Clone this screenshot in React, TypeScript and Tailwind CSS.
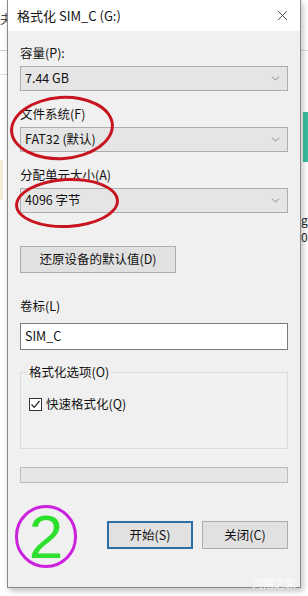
import { ChevronDown, X } from 'lucide-react';

// 格式化对话框（Windows 10 风格）
const font = { fontFamily: '"Noto Sans CJK SC", "Noto Sans", sans-serif' };

function Combo({ value }: { value: string }) {
  return (
    <div className="mt-[5px] flex h-[25px] w-[268px] items-center justify-between border border-[#adadad] bg-[#e5e5e5] pl-[4px] pr-[5px] text-[12.5px] text-[#111]">
      <span>{value}</span>
      <ChevronDown size={13} strokeWidth={1.2} className="text-[#555]" />
    </div>
  );
}

export default function App() {
  return (
    <div className="relative h-[596px] w-[308px] overflow-hidden bg-white" style={font}>
      {/* 背景里露出的其它窗口 */}
      <div className="absolute left-0 top-[10px] text-[12px] text-[#444]">夫</div>
      <div className="absolute left-0 top-[50px] h-px w-[7px] bg-[#ccc]" />
      <div className="absolute left-0 top-[74px] h-px w-[7px] bg-[#ddd]" />
      <div className="absolute left-0 top-[160px] h-[40px] w-[3px] bg-[#f4eed8]" />
      <div className="absolute right-0 top-[50px] h-px w-[7px] bg-[#ddd]" />
      <div className="absolute right-0 top-[112px] h-[50px] w-[5px] bg-[#3cbfa0]" />
      <div className="absolute left-[301px] top-[214px] text-[12px] leading-[12px] text-[#222]">g</div>
      <div className="absolute left-[301px] top-[231px] text-[12px] leading-[12px] text-[#222]">0</div>

      <div className="relative ml-[7px] flex h-[588px] w-[294px] flex-col border border-t-0 border-[#8a8a8a] bg-[#f0f0f0] shadow-[2px_3px_6px_rgba(0,0,0,0.25)]">
        {/* 标题栏 */}
        <div className="flex h-[31px] items-center justify-between bg-white pl-[9px] pr-[9px]">
          <span className="text-[13px] text-[#111]">格式化 SIM_C (G:)</span>
          <X size={17} strokeWidth={1.1} className="text-[#222]" />
        </div>

        <div className="flex flex-col pl-[12px] text-[12.5px] text-[#111]">
          <div className="mt-[14px] h-[16px] leading-[16px]">容量(P):</div>
          <Combo value="7.44 GB" />

          <div className="mt-[15px] h-[16px] leading-[16px]">文件系统(F)</div>
          <Combo value="FAT32 (默认)" />

          <div className="mt-[15px] h-[16px] leading-[16px]">分配单元大小(A)</div>
          <Combo value="4096 字节" />

          <button className="mt-[33px] h-[27px] w-[156px] border border-[#adadad] bg-[#e1e1e1] text-[12.5px] text-[#111]">
            还原设备的默认值(D)
          </button>

          <div className="mt-[25px] h-[16px] leading-[16px]">卷标(L)</div>
          <div className="mt-[9px] flex h-[27px] w-[268px] items-center border border-[#7a7a7a] bg-white pl-[4px]">
            SIM_C
          </div>

          {/* 格式化选项 */}
          <div className="relative mt-[22px] h-[77px] w-[268px] border border-[#dcdcdc]">
            <span className="absolute left-[6px] top-[-9px] bg-[#f0f0f0] px-[2px] leading-[16px]">格式化选项(O)</span>
            <div className="mt-[23px] flex items-center pl-[8px]">
              <div className="flex h-[13px] w-[13px] items-center justify-center border border-[#333] bg-white">
                <svg width="11" height="11" viewBox="0 0 11 11">
                  <path d="M1.5 5.5 L4.2 8.3 L9.5 2" fill="none" stroke="#222" strokeWidth="1.2" />
                </svg>
              </div>
              <span className="ml-[4px] leading-[16px]">快速格式化(Q)</span>
            </div>
          </div>

          {/* 进度条 */}
          <div className="mt-[18px] h-[16px] w-[268px] border border-[#bcbcbc] bg-[#e6e6e6]" />

          <div className="mt-[38px] flex w-[268px] justify-end gap-[9px]">
            <button className="h-[28px] w-[86px] border-2 border-[#2a6fa8] bg-[#e1e1e1] text-[12.5px] text-[#111]">
              开始(S)
            </button>
            <button className="h-[28px] w-[86px] border border-[#adadad] bg-[#e1e1e1] text-[12.5px] text-[#111]">
              关闭(C)
            </button>
          </div>
        </div>

        <span className="absolute bottom-[-4px] right-[4px] text-[11px] text-white/80">河南之家</span>
      </div>

      {/* 红圈标注 */}
      <div className="absolute left-[10px] top-[96px] h-[64px] w-[104px] rounded-[50%] border-[3px] border-[#c8141e] rotate-[-4deg]" />
      <div className="absolute left-[15px] top-[178px] h-[50px] w-[104px] rounded-[50%] border-[3px] border-[#c8141e] rotate-[-3deg]" />

      {/* ② 标注 */}
      <div className="absolute left-[15px] top-[505px] flex h-[63px] w-[62px] items-center justify-center rounded-full border-[3px] border-[#cc22dd]">
        <span className="text-[62px] leading-none text-[#2ee02e]" style={{ fontFamily: '"Liberation Sans", Arial, sans-serif' }}>2</span>
      </div>
    </div>
  );
}
